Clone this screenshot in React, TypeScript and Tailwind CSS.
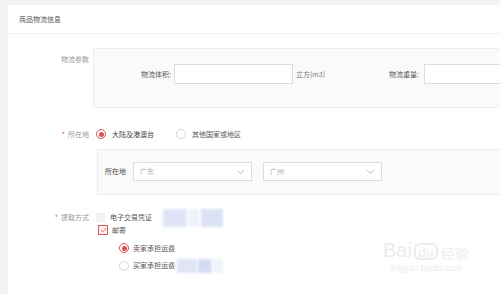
import React from 'react';

const font = { fontFamily: '"Noto Sans CJK SC", "Noto Sans", sans-serif' };

function Radio({ checked }: { checked?: boolean }) {
  return (
    <span
      className={`flex h-[10px] w-[10px] flex-none items-center justify-center rounded-full border ${
        checked ? 'border-[#d9534f]' : 'border-[#d6d6d6]'
      } bg-white`}
    >
      {checked && <span className="h-[5px] w-[5px] rounded-full bg-[#d9534f]" />}
    </span>
  );
}

function Select({ value }: { value: string }) {
  return (
    <div className="flex h-[19px] w-[119px] flex-none items-center justify-between border border-[#dcdcdc] bg-white pl-[6px] pr-[6px]">
      <span className="text-[7px] text-[#aaa]">{value}</span>
      <svg width="9" height="6" viewBox="0 0 9 6" fill="none">
        <path d="M1 1.2L4.5 4.6L8 1.2" stroke="#b5b5b5" strokeWidth="0.9" />
      </svg>
    </div>
  );
}

function Blur({ className }: { className: string }) {
  return <div className={`blur-[1.5px] ${className}`} />;
}

export default function App() {
  return (
    <div className="relative h-[294px] w-[500px] overflow-hidden bg-[#f3f3f3] pl-[8px] pt-[5px]" style={font}>
      <div className="h-full bg-white">
        {/* Header */}
        <div className="flex h-[29px] items-center border-b border-[#f0f0f0] pl-[11px] text-[7px] text-[#555]">
          商品物流信息
        </div>

        <div className="pt-[14px]">
          {/* 物流参数 */}
          <div className="flex">
            <div className="w-[85px] flex-none pt-[6px] pr-[4px] text-right text-[7px] text-[#999]">物流参数</div>
            <div className="h-[60px] w-[440px] flex-none border border-[#eeeeee] bg-[#fafafa] pl-[47px] pt-[15px]">
              <div className="flex items-center text-[7px] text-[#555]">
                <span className="w-[33px]">物流体积:</span>
                <div className="h-[20px] w-[119px] flex-none border border-[#dcdcdc] bg-white" />
                <span className="ml-[3px] w-[93px] text-[#777]">立方(m3)</span>
                <span className="w-[35px]">物流重量:</span>
                <div className="h-[20px] w-[100px] flex-none border border-[#dcdcdc] bg-white" />
              </div>
            </div>
          </div>

          {/* 所在地 */}
          <div className="mt-[21px] flex items-center">
            <div className="w-[85px] flex-none pr-[4px] text-right text-[7px] text-[#999]">
              <span className="mr-[3px] text-[#d9534f]">*</span>所在地
            </div>
            <div className="flex items-center text-[7px] text-[#444]">
              <span className="ml-[3px]"><Radio checked /></span>
              <span className="ml-[6px]">大陆及港澳台</span>
              <span className="ml-[22px]"><Radio /></span>
              <span className="ml-[6px] text-[#555]">其他国家或地区</span>
            </div>
          </div>

          <div className="mt-[9px] flex">
            <div className="w-[89px] flex-none" />
            <div className="flex h-[46px] w-[440px] flex-none items-center border border-[#eeeeee] bg-[#fafafa] pl-[7px]">
              <span className="mr-[7px] text-[7px] text-[#444]">所在地</span>
              <Select value="广东" />
              <span className="w-[11px]" />
              <Select value="广州" />
            </div>
          </div>

          {/* 提取方式 */}
          <div className="mt-[14px] flex items-center">
            <div className="w-[85px] flex-none pr-[4px] text-right text-[7px] text-[#999]">
              <span className="mr-[3px] text-[#d9534f]">*</span>提取方式
            </div>
            <div className="flex items-center text-[7px] text-[#555]">
              <span className="ml-[3px] h-[9px] w-[9px] flex-none border border-[#eee] bg-[#f4f4f4]" />
              <span className="ml-[5px]">电子交易凭证</span>
              <div className="ml-[11px] flex h-[18px] items-stretch gap-[2px]">
                <Blur className="w-[24px] bg-[#dfe5f7]" />
                <Blur className="w-[10px] bg-[#eef1fa]" />
                <Blur className="w-[22px] bg-[#dbe2f6]" />
              </div>
            </div>
          </div>

          <div className="-mt-[2px] flex items-center pl-[90px] text-[7px] text-[#555]">
            <span className="flex h-[10px] w-[10px] flex-none items-center justify-center border border-[#d9534f] bg-[#fdf3f3]">
              <svg width="7" height="6" viewBox="0 0 7 6" fill="none">
                <path d="M0.8 3L2.7 4.8L6.2 1.2" stroke="#d9534f" strokeWidth="0.9" />
              </svg>
            </span>
            <span className="ml-[4px]">邮寄</span>
          </div>

          <div className="mt-[8px] flex items-center pl-[111px] text-[7px] text-[#555]">
            <Radio checked />
            <span className="ml-[4px]">卖家承担运费</span>
          </div>

          <div className="mt-[5px] flex items-center pl-[111px] text-[7px] text-[#555]">
            <Radio />
            <span className="ml-[4px]">买家承担运费</span>
            <div className="ml-[2px] flex h-[14px] items-stretch gap-[1px]">
              <Blur className="w-[20px] bg-[#dfe5f7]" />
              <Blur className="w-[14px] bg-[#d3dcf5]" />
              <Blur className="w-[10px] bg-[#f0f3fb]" />
            </div>
          </div>
        </div>
      </div>

      {/* watermark */}
      <div className="pointer-events-none absolute left-[383px] top-[240px] flex flex-col items-center text-[#ececec]">
        <div className="flex items-end">
          <span className="text-[20px] leading-none" style={{ fontFamily: '"Liberation Sans", sans-serif' }}>Bai</span>
          <span className="ml-[2px] rounded-[6px] border-2 border-[#ececec] px-[2px] text-[13px] leading-none">du</span>
          <span className="ml-[3px] text-[14px] leading-none">经验</span>
        </div>
        <span className="mt-[4px] text-[9px] leading-none" style={{ fontFamily: '"Liberation Sans", sans-serif' }}>jingyan.baidu.com</span>
      </div>
    </div>
  );
}
